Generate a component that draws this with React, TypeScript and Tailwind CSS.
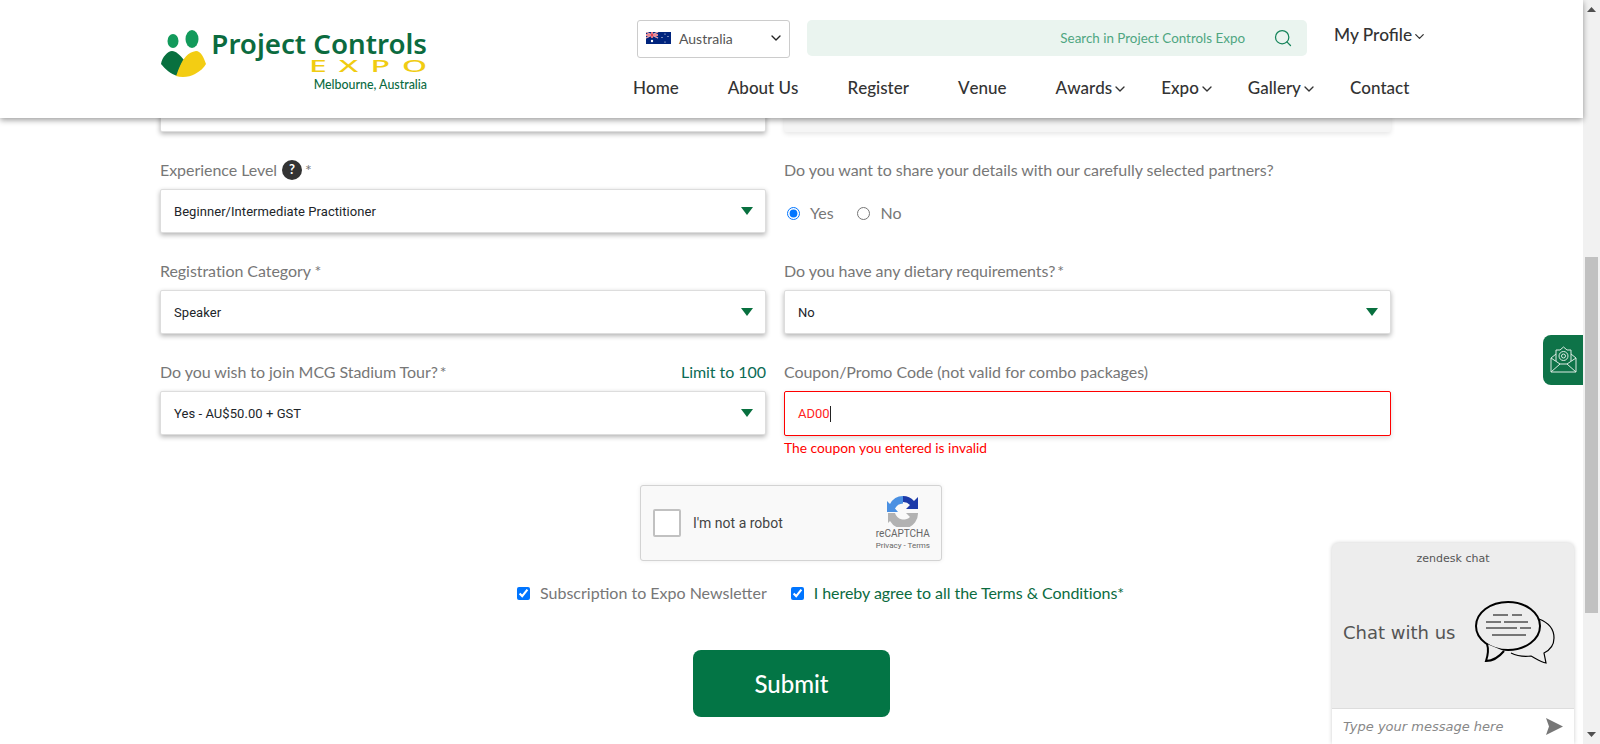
import { ChevronDown, Search } from "lucide-react";

const lato = "font-['Lato','Liberation_Sans',sans-serif]";

const Logo = () => (
	<div className="flex items-start w-[270px] pt-[29px]">
		<svg width="48" height="50" viewBox="0 0 48 50" className="shrink-0">
			<ellipse cx="13" cy="12" rx="5.5" ry="7" fill="#129a5b" />
			<ellipse cx="32" cy="10" rx="6.5" ry="9" fill="#129a5b" />
			<path d="M12 22C8 22 2 28 1 35C5 40 11 45 17 47C19 40 21 35 24 31C20 26 16 22 12 22Z" fill="#08703f" />
			<path d="M36 22C28 23 23 30 20 37C18 41 17 45 16 47C22 49 30 48 35 45C40 42 44 39 46 35C44 29 41 22 36 22Z" fill="#f3cd13" />
		</svg>
		<div className="ml-[5px] flex flex-col items-end w-[214px]">
			<span className="font-['Noto_Sans',sans-serif] font-semibold text-[27.7px] leading-[28px] text-[#0b6b3f] whitespace-nowrap">
				Project Controls
			</span>
			<span className="font-['Noto_Sans',sans-serif] font-medium text-[16px] leading-[14px] tracking-[6px] -mr-[12px] mt-[2px] text-[#f0cc12] scale-x-[2] origin-right whitespace-nowrap">
				EXPO
			</span>
			<span className={`${lato} font-medium text-[12.4px] leading-[14px] mt-[5px] text-[#0b6b3f] whitespace-nowrap`}>
				Melbourne, Australia
			</span>
		</div>
	</div>
);

const Flag = () => (
	<svg width="25" height="12" viewBox="0 0 50 24" className="shrink-0">
		<rect width="50" height="24" fill="#00247d" />
		<path d="M0 0L24 12M24 0L0 12" stroke="#fff" strokeWidth="2.4" />
		<path d="M0 0L24 12M24 0L0 12" stroke="#cf142b" strokeWidth="1" />
		<path d="M12 0V12M0 6H24" stroke="#fff" strokeWidth="4" />
		<path d="M12 0V12M0 6H24" stroke="#cf142b" strokeWidth="2.4" />
		<circle cx="12" cy="18" r="2.4" fill="#fff" />
		<circle cx="38" cy="4" r="1.2" fill="#fff" />
		<circle cx="38" cy="20" r="1.2" fill="#fff" />
		<circle cx="32" cy="11" r="1.2" fill="#fff" />
		<circle cx="44" cy="9" r="1.2" fill="#fff" />
	</svg>
);

const NavItem = ({ label, caret }: { label: string; caret?: boolean }) => (
	<a className="flex items-center whitespace-nowrap">
		{label}
		{caret && <ChevronDown size={16} strokeWidth={2} className="-mr-[16px] mt-[2px]" />}
	</a>
);

const Header = () => (
	<header className={`${lato} relative z-10 h-[118px] bg-white shadow-[0_2px_6px_rgba(0,0,0,0.4)] flex pl-[160px]`}>
		<Logo />
		<div className="ml-[207px] flex flex-col">
			<div className="flex items-start mt-[20px]">
				<div className="w-[153px] h-[38px] border border-[#ccc] rounded-[3px] flex items-center pb-[2px] pl-[8px] pr-[5px]">
					<Flag />
					<span className="ml-[8px] text-[14px] text-[#555]">Australia</span>
					<ChevronDown size={16} strokeWidth={2} className="ml-auto text-[#222]" />
				</div>
				<div className="ml-[17px] w-[500px] h-[36px] bg-[#eaf4ef] rounded-[5px] flex items-center justify-end pr-[14px]">
					<span className="text-[13.4px] text-[#4fa681]">Search in Project Controls Expo</span>
					<Search size={20} strokeWidth={1.5} className="ml-[28px] text-[#15845a]" />
				</div>
				<div className="ml-[27px] flex items-center h-[30px] text-[17.3px] font-medium text-[#333] whitespace-nowrap">
					My Profile
					<ChevronDown size={15} strokeWidth={2} className="mt-[3px]" />
				</div>
			</div>
			<nav className="mt-[17px] flex gap-[49px] -ml-[4px] text-[17px] font-medium text-[#333] [font-kerning:none]">
				<NavItem label="Home" />
				<NavItem label="About Us" />
				<NavItem label="Register" />
				<NavItem label="Venue" />
				<NavItem label="Awards" caret />
				<NavItem label="Expo" caret />
				<NavItem label="Gallery" caret />
				<NavItem label="Contact" />
			</nav>
		</div>
	</header>
);

const Select = ({ value }: { value: string }) => (
	<div className="h-[44px] bg-white border border-[#ddd] rounded-[2px] shadow-[0_2px_5px_rgba(0,0,0,0.3)] flex items-center justify-between pl-[13px] pr-[12px]">
		<span className="font-['Roboto',sans-serif] text-[13px] tracking-[0.06px] text-[#212529] pt-[2px]">{value}</span>
		<svg width="12" height="8" viewBox="0 0 12 8">
			<path d="M0 0H12L6 8Z" fill="#08703f" />
		</svg>
	</div>
);

const Label = ({ children }: { children: React.ReactNode }) => (
	<div className="h-[24px] mb-[7px] flex items-center justify-between text-[16px] tracking-[-0.05px] text-[#777]">{children}</div>
);

const Captcha = () => (
	<div className="w-[302px] h-[76px] ml-[480px] bg-[#f9f9f9] border border-[#d3d3d3] rounded-[3px] shadow-[0_0_4px_rgba(0,0,0,0.08)] flex items-center pl-[12px] pr-[11px]">
		<div className="w-[28px] h-[28px] bg-white border-2 border-[#c1c1c1] rounded-[2px]"></div>
		<span className="ml-[12px] font-['Roboto',sans-serif] text-[14px] text-[#444]">I'm not a robot</span>
		<div className="ml-auto flex flex-col items-center font-['Roboto',sans-serif] text-[#666]">
			<svg width="32" height="32" viewBox="0 0 32 32">
				<path d="M16 1A15 15 0 0 0 3 9L0 6V17H11L8 13.500A9.500 9.500 0 0 1 16 8.500Z" fill="#4a90e2" />
				<path d="M16 1A15 15 0 0 1 27 6L31 2V14H19L23 10A9 9 0 0 0 16 7Z" fill="#1c3aa9" />
				<path d="M1 18H8A9 9 0 0 0 23 22L19 18H31A15 15 0 0 1 3 26L1 28Z" fill="#b2b2b2" />
			</svg>
			<span className="text-[10px] leading-[12px] mt-[1px]">reCAPTCHA</span>
			<span className="text-[8px] leading-[12px]">Privacy - Terms</span>
		</div>
	</div>
);

const Form = () => (
	<main className={`${lato} -mt-[30px] pl-[160px] w-[1391px]`}>
		<div className="grid grid-cols-[606px_607px] gap-x-[18px]">
			<div className="mb-[26px]">
				<div className="h-[44px] bg-white border border-[#ddd] rounded-[2px] shadow-[0_2px_5px_rgba(0,0,0,0.3)]"></div>
			</div>
			<div className="mb-[26px]">
				<div className="h-[44px] bg-[#f5f5f5] rounded-[2px] shadow-[0_2px_5px_rgba(0,0,0,0.1)]"></div>
			</div>

			<div className="mb-[26px]">
				<Label>
					<span className="flex items-center">
						Experience Level
						<span className="ml-[5px] w-[20px] h-[20px] rounded-full bg-[#333] text-white text-[13px] font-bold flex items-center justify-center">
							?
						</span>
						<span className="ml-[3px]">*</span>
					</span>
				</Label>
				<Select value="Beginner/Intermediate Practitioner" />
			</div>
			<div className="mb-[26px]">
				<Label>Do you want to share your details with our carefully selected partners?</Label>
				<div className="h-[44px] flex items-center pt-[4px] pl-[3px] text-[16px] text-[#777]">
					<input type="radio" name="share" defaultChecked className="w-[13px] h-[13px] m-0" />
					<span className="ml-[10px]">Yes</span>
					<input type="radio" name="share" className="ml-[23px] w-[13px] h-[13px] m-0" />
					<span className="ml-[11px]">No</span>
				</div>
			</div>

			<div className="mb-[26px]">
				<Label>Registration Category *</Label>
				<Select value="Speaker" />
			</div>
			<div className="mb-[26px]">
				<Label>
					<span>
						Do you have any dietary requirements?<span className="ml-[2px]">*</span>
					</span>
				</Label>
				<Select value="No" />
			</div>

			<div>
				<Label>
					<span>
						Do you wish to join MCG Stadium Tour?<span className="ml-[2px]">*</span>
					</span>
					<span className="text-[#0b6b55]">Limit to 100</span>
				</Label>
				<Select value="Yes - AU$50.00 + GST" />
			</div>
			<div>
				<Label>Coupon/Promo Code (not valid for combo packages)</Label>
				<div className="h-[45px] bg-white border border-[#f00] rounded-[2px] flex items-center pl-[13px] font-['Roboto',sans-serif] text-[13px] text-[#f22] shadow-[0_2px_5px_rgba(0,0,0,0.15)]">
					AD00
					<span className="w-px h-[16px] bg-[#222]"></span>
				</div>
				<p className="mt-[4px] text-[13.800px] leading-[16px] text-[#f00]">The coupon you entered is invalid</p>
			</div>
		</div>

		<div className="mt-[29px]">
			<Captcha />
		</div>

		<div className="mt-[22px] ml-[357px] flex items-center h-[20px] text-[16px]">
			<input type="checkbox" defaultChecked className="w-[13px] h-[13px] m-0" />
			<span className="ml-[10px] text-[#777] whitespace-nowrap">Subscription to Expo Newsletter</span>
			<input type="checkbox" defaultChecked className="ml-[24px] w-[13px] h-[13px] m-0" />
			<span className="ml-[10px] tracking-[-0.05px] text-[#0b6b3f] whitespace-nowrap">I hereby agree to all the Terms &amp; Conditions*</span>
		</div>

		<div className="mt-[47px] ml-[533px]">
			<button className="w-[197px] h-[67px] bg-[#037545] rounded-[8px] text-white text-[24px] font-medium">Submit</button>
		</div>
	</main>
);

const MailTab = () => (
	<div className="absolute top-[335px] right-[17px] w-[40px] h-[50px] bg-[#0e7348] rounded-l-[8px] flex items-center justify-center">
		<svg width="27" height="30" viewBox="0 0 27 30" fill="none" stroke="#dcebe3" strokeWidth="1">
			<path d="M1 13V27H26V13L21 9" />
			<path d="M6 9L1 13L10 19M26 13L17 19" />
			<path d="M1 27L10 19H17L26 27" />
			<path d="M6 16V5H10L13.500 2L17 5H21V16" />
			<circle cx="13.500" cy="11" r="4.500" />
			<circle cx="13.500" cy="11" r="2" />
		</svg>
	</div>
);

const ChatWidget = () => (
	<div className="absolute top-[543px] left-[1332px] w-[242px] h-[201px] bg-[#ededed] rounded-t-[6px] shadow-[0_0_4px_rgba(0,0,0,0.2)] flex flex-col">
		<div className="text-center text-[11px] text-[#555] font-['DejaVu_Sans',sans-serif] pt-[9px] leading-[14px]">zendesk chat</div>
		<div className="flex-1 flex items-center pl-[11px] pb-[10px]">
			<span className="font-['DejaVu_Sans',sans-serif] text-[18px] text-[#555]">Chat with us</span>
			<svg width="82" height="64" viewBox="0 0 82 64" className="ml-[20px]" fill="none" stroke="#000">
				<path d="M64 19C72 22 79 28 79 38C79 46 75 50 69 53L71 63C66 62 60 58 56 56C48 57 42 56 36 53" strokeWidth="1.200" />
				<ellipse cx="33" cy="26" rx="32" ry="24" fill="#ededed" strokeWidth="2" />
				<path d="M12 44C14 50 13 55 11 61C18 61 24 57 29 51" fill="#ededed" strokeWidth="2" />
				<path d="M18 15H33M37 15H47M11 22H26M29 22H53M11 28H42M45 28H56M17 35H51" strokeWidth="1.200" />
			</svg>
		</div>
		<div className="h-[36px] bg-white border-t border-[#ddd] flex items-center pl-[11px] pr-[11px]">
			<span className="font-['DejaVu_Sans',sans-serif] italic text-[13px] text-[#888]">Type your message here</span>
			<svg width="17" height="17" viewBox="0 0 17 17" className="ml-auto">
				<path d="M0 0L17 8.500L0 17L3 8.500Z" fill="#777" />
			</svg>
		</div>
	</div>
);

const Scrollbar = () => (
	<div className="w-[17px] h-full bg-[#f1f1f1] flex flex-col items-center shrink-0">
		<svg width="9" height="5" viewBox="0 0 9 5" className="mt-[7px]">
			<path d="M0 5L4.500 0L9 5Z" fill="#505050" />
		</svg>
		<div className="mt-[245px] w-[13px] h-[356px] bg-[#c1c1c1]"></div>
		<svg width="9" height="5" viewBox="0 0 9 5" className="mt-[119px]">
			<path d="M0 0H9L4.500 5Z" fill="#505050" />
		</svg>
	</div>
);

export default function App() {
	return (
		<div className="relative flex w-full h-[744px] overflow-hidden bg-white">
			<div className="flex-1 min-w-0">
				<Header />
				<Form />
			</div>
			<MailTab />
			<Scrollbar />
			<ChatWidget />
		</div>
	);
}
